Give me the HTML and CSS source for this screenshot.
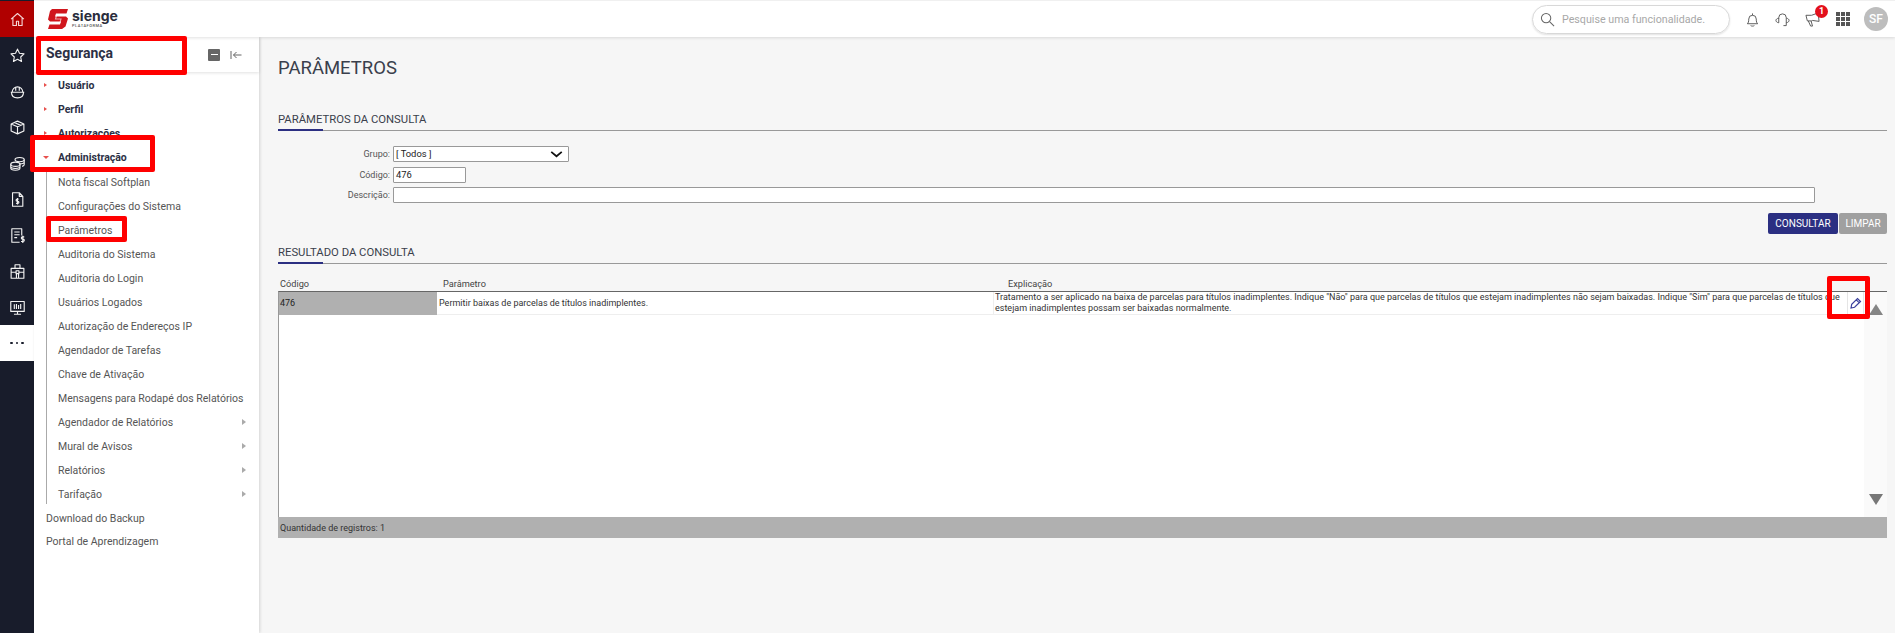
FILE: index.html
```html
<!DOCTYPE html>
<html lang="pt-BR">
<head>
<meta charset="utf-8">
<title>Parâmetros</title>
<link rel="stylesheet" href="styles.css">
</head>
<body>
<div class="app">
  <nav class="rail">
    <a class="rail-item rail-home"><svg viewBox="0 0 24 24" class="ri"><path d="M3 11.500 12 3.500l9 8M5.500 9.500V20.500h5v-6h3v6h5V9.500"/></svg></a>
    <a class="rail-item"><svg viewBox="0 0 24 24" class="ri"><path d="m12 3 2.800 5.900 6.400.8-4.700 4.400 1.200 6.400-5.700-3.100-5.700 3.100 1.200-6.400-4.700-4.400 6.400-.8z"/></svg></a>
    <a class="rail-item"><svg viewBox="0 0 24 24" class="ri"><path d="M2.500 13h19M4.500 13a7.500 7.500 0 0 1 15 0M3.500 13c0 4.500 3 8 8.500 8s8.500-3.500 8.500-8M9.500 5.800V11M14.500 5.800V11"/></svg></a>
    <a class="rail-item"><svg viewBox="0 0 24 24" class="ri"><path d="m12 3 9 4v10l-9 4-9-4V7zM3 7l9 4 9-4M12 11v10M7.500 5l9 4"/></svg></a>
    <a class="rail-item"><svg viewBox="0 0 24 24" class="ri"><ellipse cx="15" cy="6.500" rx="6.500" ry="3"/><path d="M21.500 6.500v7c0 1-1 2-3 2.500M15 12.500c3 0 6.500-.8 6.500-2.500"/><ellipse cx="9" cy="13" rx="6.500" ry="3"/><path d="M2.500 13v5.500c0 1.700 2.900 3 6.500 3s6.500-1.300 6.500-3V13M2.500 16c0 1.700 2.900 3 6.500 3s6.500-1.300 6.500-3"/></svg></a>
    <a class="rail-item"><svg viewBox="0 0 24 24" class="ri"><path d="M5 2.500h9.500l5 5v14H5zM14.500 2.500v5h5M13.500 11.500h-2a1.500 1.500 0 0 0 0 3h1a1.500 1.500 0 0 1 0 3h-2.500M12 10v9"/></svg></a>
    <a class="rail-item"><svg viewBox="0 0 24 24" class="ri"><path d="M15 21.500H4v-19h14v9.500M7.500 7H15M7.500 11H15M7.500 15h4M21.500 14H19a1.500 1.500 0 0 0 0 3.200h1a1.500 1.500 0 0 1 0 3.200h-3M19.500 12.500v10"/></svg></a>
    <a class="rail-item"><svg viewBox="0 0 24 24" class="ri"><path d="M3 7.500h18v14H3zM8.500 7.500v-5h7v5M10 11h4v4h-4zM10.500 15v6.500M13.500 15v6.500M3 13h7M14 13h7"/></svg></a>
    <a class="rail-item"><svg viewBox="0 0 24 24" class="ri"><path d="M2.500 3.500h19v14h-19zM12 17.500v4M7 21.500h10M7.500 14V7.500M10.500 14V7M13.500 14V8.500M16.500 14V7"/></svg></a>
    <a class="rail-item rail-more"><span class="dots"><i></i><i></i><i></i></span></a>
  </nav>

  <div class="shell">
    <header class="topbar">
      <div class="logo">
        <svg viewBox="0 0 20 20" class="logo-mark"><path class="lm-red" d="M4 0h16l-1.500 4.500H8L7 7.500h11l2 2-2.500 8L14 20H0l1.500-4.500H12l1-3H2l-2-2L2 2z"/><path class="lm-white" d="M14 6.500H8.500L7.500 10h5.500l-1 3.500H6.500"/></svg>
        <div class="logo-text"><span class="logo-name">sienge</span><span class="logo-sub">PLATAFORMA</span></div>
      </div>
      <div class="top-tools">
        <div class="search">
          <svg viewBox="0 0 16 16" class="search-icon"><circle cx="6.500" cy="6.500" r="5"/><path d="m10.200 10.200 4.800 4.800"/></svg>
          <span>Pesquise uma funcionalidade.</span>
        </div>
        <svg viewBox="0 0 16 16" class="tool t-bell"><path d="M2.500 12.500c1-1 1.500-2 1.500-5a4 4 0 0 1 8 0c0 3 .5 4 1.500 5zM6 14.500c1 .7 3 .7 4 0M8 3.500V1.500"/></svg>
        <svg viewBox="0 0 16 16" class="tool t-head"><path d="M4 7V6a4 4 0 0 1 8 0v1M4 6.500C2 6.800 1 8 1 9s1 2.300 3 2.500zM12 6.500c2 .3 3 1.500 3 2.500s-1 2.300-3 2.500M12 7v7.500H9"/></svg>
        <div class="megaphone">
          <svg viewBox="0 0 16 16" class="tool"><path d="M1 3.500h6L14 1l1 9-7-1-1 .5H2.500zM3.500 9.500 6 15h2L6.500 9.500"/></svg>
          <span class="badge">1</span>
        </div>
        <div class="apps"><i></i><i></i><i></i><i></i><i></i><i></i><i></i><i></i><i></i></div>
        <div class="avatar">SF</div>
      </div>
    </header>

    <div class="body-row">
      <aside class="sidebar">
        <div class="side-head">
          <span class="side-title">Segurança</span>
          <span class="collapse"><i></i></span>
          <svg viewBox="0 0 12 10" class="side-back"><path d="M1 1v8M11.500 5H3.500M6.500 2 3.500 5l3 3"/></svg>
        </div>
        <ul class="menu">
          <li class="top"><span class="caret"></span>Usuário</li>
          <li class="top"><span class="caret"></span>Perfil</li>
          <li class="top"><span class="caret"></span>Autorizações</li>
          <li class="top"><span class="caret caret-open"></span>Administração</li>
        </ul>
        <ul class="submenu">
          <li>Nota fiscal Softplan</li>
          <li>Configurações do Sistema</li>
          <li>Parâmetros</li>
          <li>Auditoria do Sistema</li>
          <li>Auditoria do Login</li>
          <li>Usuários Logados</li>
          <li>Autorização de Endereços IP</li>
          <li>Agendador de Tarefas</li>
          <li>Chave de Ativação</li>
          <li>Mensagens para Rodapé dos Relatórios</li>
          <li class="has-sub">Agendador de Relatórios<span class="sub-arrow"></span></li>
          <li class="has-sub">Mural de Avisos<span class="sub-arrow"></span></li>
          <li class="has-sub">Relatórios<span class="sub-arrow"></span></li>
          <li class="has-sub">Tarifação<span class="sub-arrow"></span></li>
        </ul>
        <ul class="plain">
          <li>Download do Backup</li>
          <li>Portal de Aprendizagem</li>
        </ul>
      </aside>

      <main class="main">
        <h1 class="page-title">PARÂMETROS</h1>
        <h2 class="section first">PARÂMETROS DA CONSULTA</h2>
        <form class="form">
          <label>Grupo:</label>
          <div class="field select">[ Todos ]<svg viewBox="0 0 14 8" class="chev"><path d="m1 1 6 5 6-5"/></svg></div>
          <label>Código:</label>
          <div class="field code">476</div>
          <label>Descrição:</label>
          <div class="field desc"></div>
        </form>
        <div class="actions">
          <button type="button" class="btn primary">CONSULTAR</button>
          <button type="button" class="btn muted">LIMPAR</button>
        </div>
        <h2 class="section second">RESULTADO DA CONSULTA</h2>
        <div class="thead">
          <span class="th-code">Código</span>
          <span class="th-param">Parâmetro</span>
          <span class="th-exp">Explicação</span>
        </div>
        <div class="tbody">
          <div class="rows">
            <div class="row">
              <div class="c-code">476</div>
              <div class="c-param">Permitir baixas de parcelas de títulos inadimplentes.</div>
              <div class="c-exp">Tratamento a ser aplicado na baixa de parcelas para títulos inadimplentes. Indique "Não" para que parcelas de títulos que estejam inadimplentes não sejam baixadas. Indique "Sim" para que parcelas de títulos que estejam inadimplentes possam ser baixadas normalmente.</div>
              <div class="c-edit"><svg viewBox="0 0 12 12" class="pencil"><path d="M1 11l.7-3.600L7.500 1.500 10.500 4.500 4.600 10.300zM6.300 2.800l3 3"/></svg></div>
            </div>
          </div>
          <div class="scroll">
            <span class="arrow-up"></span>
            <span class="arrow-down"></span>
          </div>
        </div>
        <div class="tfoot">Quantidade de registros: 1</div>
      </main>
    </div>
  </div>

  <span class="mark mark-title"></span>
  <span class="mark mark-admin"></span>
  <span class="mark mark-param"></span>
  <span class="mark mark-edit"></span>
</div>
</body>
</html>
```
FILE: styles.css
```css
* { box-sizing: border-box; }
html, body { margin: 0; padding: 0; height: 100%; overflow: hidden; }
body { font-family: Roboto, "Liberation Sans", sans-serif; color: #333; background: #f6f6f6; }
ul { list-style: none; margin: 0; padding: 0; }
.app { position: relative; display: flex; width: 1895px; height: 633px; overflow: hidden; }

.rail { width: 34px; flex: none; background: #181c2b; display: flex; flex-direction: column; padding-top: 1px; }
.rail-item { height: 36px; display: flex; align-items: center; justify-content: center; }
.rail-home { background: #b00000; }
.rail-more { background: #fff; }
.ri { width: 17px; height: 17px; fill: none; stroke: #f2f2f2; stroke-width: 1.600; stroke-linejoin: round; }
.rail-home .ri { stroke: #f5d5d5; }
.dots { display: flex; gap: 3px; }
.dots i { width: 2.500px; height: 2.500px; background: #181c2b; border-radius: 50%; }

.shell { flex: 1; display: flex; flex-direction: column; min-width: 0; }
.topbar { height: 37px; flex: none; background: #fff; display: flex; align-items: center; justify-content: space-between; box-shadow: 0 1px 3px rgba(0,0,0,.12); position: relative; z-index: 3; padding: 0 7px 0 14px; border-top: 1px solid #f0f0f0; }
.logo { display: flex; align-items: center; gap: 4px; }
.logo-mark { width: 20px; height: 20px; }
.lm-red { fill: #d0161d; }
.lm-white { fill: none; stroke: #fff; stroke-width: 1.100; opacity: .6; }
.logo-text { display: flex; flex-direction: column; }
.logo-name { font-size: 14px; line-height: 13px; font-weight: 700; color: #2a2d3c; font-family: Inter, Roboto, sans-serif; }
.logo-sub { font-size: 4px; line-height: 7px; font-weight: 500; color: #555; letter-spacing: .5px; }
.top-tools { display: flex; align-items: center; }
.search { width: 198px; height: 29px; border: 1px solid #d8d8d8; border-radius: 15px; display: flex; align-items: center; padding-left: 7px; gap: 7px; font-size: 10.700px; color: #a8a8a8; box-shadow: 0 1px 2px rgba(0,0,0,.12); }
.search-icon { width: 15px; height: 15px; fill: none; stroke: #666; stroke-width: 1.100; }
.tool { width: 15px; height: 15px; fill: none; stroke: #555; stroke-width: 1; display: block; }
.t-bell { margin-left: 15px; }
.t-head { margin-left: 15px; }
.megaphone { position: relative; margin-left: 15px; }
.badge { position: absolute; top: -7px; right: -8px; width: 13px; height: 13px; border-radius: 50%; background: #e3101c; color: #fff; font-size: 9px; font-weight: 700; line-height: 13px; text-align: center; }
.apps { display: grid; grid-template-columns: repeat(3, 4px); gap: 1px; margin-left: 16px; }
.apps i { width: 4px; height: 4px; background: #555; }
.avatar { width: 24px; height: 24px; border-radius: 50%; background: #bdbdbd; color: #fff; font-size: 12px; font-weight: 500; line-height: 24px; text-align: center; margin-left: 14px; }

.body-row { flex: 1; display: flex; min-height: 0; }
.sidebar { width: 225px; flex: none; background: #fff; box-shadow: 1px 0 3px rgba(0,0,0,.14); position: relative; z-index: 2; font-size: 10.500px; color: #444; }
.side-head { height: 35px; display: flex; align-items: center; padding-left: 12px; box-shadow: 0 1px 3px rgba(0,0,0,.12); }
.side-title { font-size: 14px; font-weight: 700; color: #2c3045; flex: 1; padding-bottom: 3px; }
.collapse { width: 12px; height: 12px; background: #666; border-radius: 1px; display: flex; align-items: center; justify-content: center; margin-right: 10px; }
.collapse i { width: 7px; height: 1.500px; background: #fff; }
.side-back { width: 12px; height: 10px; fill: none; stroke: #666; stroke-width: 1; margin-right: 17px; }
.menu li { height: 24px; padding-top: 2px; display: flex; align-items: center; padding-left: 10px; font-weight: 700; color: #2c3045; }
.caret { width: 0; height: 0; border-left: 3px solid #e8504d; border-top: 2.500px solid transparent; border-bottom: 2.500px solid transparent; margin-right: 11px; }
.caret-open { border-left: 3px solid transparent; border-right: 3px solid transparent; border-top: 3px solid #e8504d; border-bottom: 0; margin-left: -1px; margin-right: 9px; }
.submenu { margin-left: 12px; border-left: 1px solid #aaa; }
.submenu li { height: 24px; padding-top: 4px; padding-left: 11px; padding-right: 13px; display: flex; align-items: center; justify-content: space-between; color: #555; }
.sub-arrow { width: 0; height: 0; border-left: 4px solid #aaa; border-top: 3.500px solid transparent; border-bottom: 3.500px solid transparent; }
.plain { padding: 1px 0 0 12px; }
.plain li { height: 23px; padding-top: 3px; display: flex; align-items: center; color: #555; }

.main { flex: 1; min-width: 0; padding: 19px 8px 0 19px; }
.page-title { margin: 0; font-size: 18.500px; line-height: 24px; font-weight: 400; color: #3a3f4c; }
.section { margin: 0; font-size: 11.300px; font-weight: 400; line-height: 26px; height: 24px; color: #3a3f4c; background: linear-gradient(#2b2f82, #2b2f82) left bottom / 45px 2px no-repeat, linear-gradient(#999, #999) left bottom / 100% 1px no-repeat; }
.section.first { margin-top: 27px; }
.section.second { margin-top: 6px; }
.form { display: grid; grid-template-columns: 112px 1fr; column-gap: 3px; row-gap: 4.500px; margin-top: 15px; font-size: 9px; align-items: center; }
.form label { text-align: right; color: #555; }
.field { height: 16px; line-height: 14px; background: #fff; border: 1px solid #999; border-radius: 1px; padding: 0 2px; color: #222; font-size: 9.400px; }
.select { width: 176px; display: flex; align-items: center; justify-content: space-between; padding-right: 5px; }
.chev { width: 13px; height: 7px; fill: none; stroke: #111; stroke-width: 2; }
.code { width: 73px; }
.desc { width: 1422px; }
.actions { display: flex; justify-content: flex-end; gap: 1px; margin-top: 9.500px; }
.btn { height: 21px; border: 0; border-radius: 2px; color: #fff; font-family: inherit; font-size: 10px; padding: 0; }
.primary { width: 70px; background: #2b2f82; }
.muted { width: 48px; background: #a0a0a0; }
.thead { height: 27px; display: grid; grid-template-columns: 159px 556px 1fr; font-size: 9.200px; color: #444; align-items: end; line-height: 14px; }
.th-code { padding-left: 2px; }
.th-param { padding-left: 6px; }
.th-exp { padding-left: 15px; }
.tbody { height: 226px; display: flex; background: #fff; border-left: 1px solid #999; border-top: 1px solid #666; }
.rows { flex: 1; min-width: 0; }
.row { display: grid; grid-template-columns: 158px 556px 854px 17px; height: 23px; border-bottom: 1px solid #eee; font-size: 9px; color: #333; line-height: 11.500px; }
.c-code { background: #b0b0b0; display: flex; align-items: center; padding: 2px 0 0 1px; color: #222; }
.c-param { display: flex; align-items: center; padding: 2px 0 0 2px; }
.c-exp { padding: 0 3px 0 1px; display: flex; align-items: center; border-left: 1px solid #eee; }
.c-edit { border-left: 1px solid #e5e5e5; border-right: 1px solid #e5e5e5; display: flex; align-items: center; justify-content: center; }
.pencil { width: 12px; height: 12px; fill: none; stroke: #3a3f9c; stroke-width: 1.200; }
.scroll { width: 23px; flex: none; background: #fafafa; display: flex; flex-direction: column; align-items: center; justify-content: space-between; padding: 12px 0; }
.arrow-up { width: 0; height: 0; border-left: 7px solid transparent; border-right: 7px solid transparent; border-bottom: 11px solid #858585; }
.arrow-down { width: 0; height: 0; border-left: 7px solid transparent; border-right: 7px solid transparent; border-top: 11px solid #777; }
.tfoot { height: 21px; line-height: 23px; background: #b0b0b0; font-size: 9px; color: #333; padding-left: 2px; }

.mark { position: absolute; border: 5px solid #f00; border-radius: 2px; z-index: 5; pointer-events: none; }
.mark-title { left: 36px; top: 36px; width: 151px; height: 39px; }
.mark-admin { left: 30px; top: 135px; width: 125px; height: 37px; }
.mark-param { left: 46px; top: 216px; width: 81px; height: 26px; }
.mark-edit { left: 1827px; top: 276px; width: 43px; height: 43px; }
```
